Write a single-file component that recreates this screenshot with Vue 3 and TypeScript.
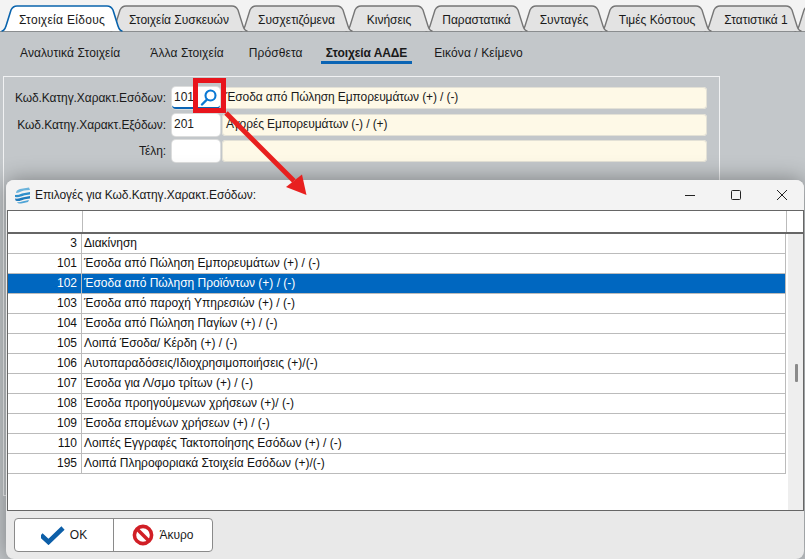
<script setup lang="ts">
interface Tab { label: string; width: number; active?: boolean }
const tabs: Tab[] = [
  { label: 'Στοιχεία Είδους', width: 122, active: true },
  { label: 'Στοιχεία Συσκευών', width: 138 },
  { label: 'Συσχετιζόμενα', width: 113 },
  { label: 'Κινήσεις', width: 88 },
  { label: 'Παραστατικά', width: 103 },
  { label: 'Συνταγές', width: 88 },
  { label: 'Τιμές Κόστους', width: 112 },
  { label: 'Στατιστικά 1', width: 98 },
  { label: '', width: 60 },
]
const tabPath = (w: number): string => {
  const h = 26
  return `M0.5,${h} C3,${h} 4,${h - 2} 5,${h - 5} L10,5 Q12,1 16,1 L${w - 16},1 Q${w - 12},1 ${w - 10},5 L${w - 5},${h - 5} C${w - 4},${h - 2} ${w - 3},${h} ${w - 0.5},${h}`
}
const subTabs = [
  { label: 'Αναλυτικά Στοιχεία' },
  { label: 'Άλλα Στοιχεία' },
  { label: 'Πρόσθετα' },
  { label: 'Στοιχεία ΑΑΔΕ', active: true },
  { label: 'Εικόνα / Κείμενο' },
]
const fields = [
  { label: 'Κωδ.Κατηγ.Χαρακτ.Εσόδων:', code: '101', text: 'Έσοδα από Πώληση Εμπορευμάτων (+) / (-)', focus: true },
  { label: 'Κωδ.Κατηγ.Χαρακτ.Εξόδων:', code: '201', text: 'Αγορές Εμπορευμάτων (-) / (+)', focus: false },
  { label: 'Τέλη:', code: '', text: '', focus: false },
]
const rows = [
  { code: 3, text: 'Διακίνηση' },
  { code: 101, text: 'Έσοδα από Πώληση Εμπορευμάτων (+) / (-)' },
  { code: 102, text: 'Έσοδα από Πώληση Προϊόντων (+) / (-)', selected: true },
  { code: 103, text: 'Έσοδα από παροχή Υπηρεσιών (+) / (-)' },
  { code: 104, text: 'Έσοδα από Πώληση Παγίων (+) / (-)' },
  { code: 105, text: 'Λοιπά Έσοδα/ Κέρδη (+) / (-)' },
  { code: 106, text: 'Αυτοπαραδόσεις/Ιδιοχρησιμοποιήσεις (+)/(-)' },
  { code: 107, text: 'Έσοδα για Λ/σμο τρίτων (+) / (-)' },
  { code: 108, text: 'Έσοδα προηγούμενων χρήσεων (+)/ (-)' },
  { code: 109, text: 'Έσοδα επομένων χρήσεων (+) / (-)' },
  { code: 110, text: 'Λοιπές Εγγραφές Τακτοποίησης Εσόδων (+) / (-)' },
  { code: 195, text: 'Λοιπά Πληροφοριακά Στοιχεία Εσόδων (+)/(-)' },
]
</script>

<template>
  <div class="page">
    <div class="tabbar">
      <div
        v-for="(t, i) in tabs"
        :key="i"
        class="tab"
        :class="{ active: t.active }"
        :style="{ width: t.width + 'px', zIndex: 20 - i }"
      >
        <svg class="tab-shape" :width="t.width" height="27">
          <path :d="tabPath(t.width)" />
        </svg>
        <span class="tab-label">{{ t.label }}</span>
      </div>
    </div>

    <div class="content">
      <nav class="subtabs">
        <span v-for="s in subTabs" :key="s.label" class="subtab" :class="{ on: s.active }">{{ s.label }}</span>
      </nav>

      <section class="panel">
        <div v-for="f in fields" :key="f.label" class="field">
          <label class="field-label">{{ f.label }}</label>
          <div class="code" :class="{ focus: f.focus }">
            <span class="code-value">{{ f.code }}</span>
            <svg v-if="f.focus" class="lens" width="17" height="17" viewBox="0 0 17 17">
              <circle cx="10.5" cy="6.5" r="5" fill="none" stroke="#0a78d4" stroke-width="2.1" />
              <path d="M7 10.5 L2 15.5" stroke="#0a78d4" stroke-width="2.4" stroke-linecap="round" />
            </svg>
          </div>
          <div class="desc">{{ f.text }}</div>
        </div>
      </section>
    </div>

    <div class="dialog">
      <header class="titlebar">
        <svg class="app-icon" width="17" height="17" viewBox="0 0 17 17">
          <path d="M2 6 Q2 3 6 2 L15 0.5 L16 3 Q9 3 6 5 Q4 6 2 6Z" fill="#6cb4dc" />
          <path d="M1 8 Q5 8 8 6.5 L16 5 L16 7.5 Q10 8 7 9.5 Q4 10.500 1 10Z" fill="#2f8fcb" />
          <path d="M1 11.500 Q5 12 8 10.500 L16 9 L16 11.500 Q10 12 7 13.500 Q4 14.500 1.500 13.500Z" fill="#1f7bbc" />
          <path d="M3 15 Q6 15.500 8 14.500 L15 13 L14 15 Q9 16 7 16.500 Q4 17 3 15Z" fill="#4fa4d6" />
        </svg>
        <span class="title">Επιλογές για Κωδ.Κατηγ.Χαρακτ.Εσόδων:</span>
        <div class="win-controls">
          <svg width="10" height="10" viewBox="0 0 10 10"><path d="M0 5.500H10" stroke="#222" stroke-width="1" /></svg>
          <svg width="10" height="10" viewBox="0 0 10 10"><rect x="0.500" y="0.500" width="9" height="9" rx="1" fill="none" stroke="#222" /></svg>
          <svg width="10" height="10" viewBox="0 0 10 10"><path d="M0 0L10 10M10 0L0 10" stroke="#222" stroke-width="1" /></svg>
        </div>
      </header>

      <div class="table">
        <div class="thead">
          <div class="th-code"></div>
          <div class="th-text"></div>
          <div class="th-rest"></div>
        </div>
        <div class="tbody">
          <div class="rows">
            <div v-for="r in rows" :key="r.code" class="row" :class="{ selected: r.selected }">
              <span class="c-code">{{ r.code }}</span>
              <span class="c-text">{{ r.text }}</span>
            </div>
          </div>
          <div class="scrollbar"><div class="thumb"></div></div>
        </div>
      </div>

      <footer class="footer">
        <div class="btn-group">
          <button class="btn">
            <svg width="24" height="20" viewBox="0 0 24 20">
              <path d="M0 10 L7.500 17 L22 3" fill="none" stroke="#0d5fa8" stroke-width="4.600" />
            </svg>
            <span>OK</span>
          </button>
          <button class="btn">
            <svg width="22" height="22" viewBox="0 0 22 22">
              <circle cx="11" cy="11" r="8.600" fill="#fff" stroke="#d11f26" stroke-width="3.600" />
              <path d="M5 5 L17 17" stroke="#d11f26" stroke-width="3.600" />
            </svg>
            <span>Άκυρο</span>
          </button>
        </div>
      </footer>
    </div>

    <svg class="callout" width="805" height="559" viewBox="0 0 805 559">
      <rect x="195.500" y="80.500" width="28" height="30" fill="none" stroke="#e8141c" stroke-width="5" />
      <path d="M226 113 L294 181" stroke="#e8201f" stroke-width="5" />
      <path d="M306.500 195 L286 187 L302 174.500Z" fill="#e8201f" />
    </svg>
  </div>
</template>

<style>
html, body { margin: 0; padding: 0; }
</style>

<style scoped>
.page {
  position: relative;
  width: 805px;
  height: 559px;
  overflow: hidden;
  font-family: "Liberation Sans", Arial, sans-serif;
  font-size: 12px;
  color: #1a1a1a;
  background: #c3c7ca;
}
.tabbar {
  display: flex;
  align-items: flex-end;
  height: 32px;
  box-sizing: border-box;
  padding: 5px 0 0 1px;
  background: #f3f3f3;
  overflow: hidden;
}
.tab {
  position: relative;
  flex: none;
  height: 27px;
  margin-right: -8px;
  display: flex;
  align-items: center;
  justify-content: center;
}
.tab.active { margin-right: -13px; }
.tab-shape { position: absolute; left: 0; top: 0; }
.tab-shape path { fill: #e3e3e3; stroke: #767676; stroke-width: 1.4; }
.tab.active .tab-shape path { fill: #fff; stroke: #0a64ad; stroke-width: 1.6; }
.tab-label { position: relative; top: 1px; }
.tab.active .tab-label { letter-spacing: 0.3px; }
.tab:nth-child(7) .tab-label { left: 1px; }
.tab:nth-child(8) .tab-label { left: 3px; }
.content {
  border-top: 1px solid #8a8d8f;
  margin-top: -1px;
  position: relative;
}
.subtabs {
  display: flex;
  height: 44px;
  box-sizing: border-box;
  padding: 13px 0 0 20px;
}
.subtab {
  margin-right: 26px;
  height: 17px;
  line-height: 17px;
  position: relative;
  letter-spacing: 0.1px;
}
.subtab:nth-child(1) { margin-right: 30px; }
.subtab:nth-child(2) { margin-right: 25px; }
.subtab:nth-child(3) { margin-right: 23px; }
.subtab:nth-child(4) { margin-right: 27px; }
.subtab.on { font-weight: 700; letter-spacing: -0.1px; }
.subtab.on::after {
  content: "";
  position: absolute;
  left: -5px;
  right: -5px;
  bottom: -2px;
  height: 3px;
  background: #0a64b4;
}
.panel {
  margin-left: 3px;
  width: 717px;
  height: 420px;
  box-sizing: border-box;
  border: 1px solid #f1f2f3;
  padding: 10px 0 0;
  display: flex;
  flex-direction: column;
  gap: 4.500px;
}
.field { display: flex; align-items: stretch; height: 22px; }
.field-label {
  width: 162px;
  text-align: right;
  line-height: 22px;
  flex: none;
  letter-spacing: -0.08px;
}
.code {
  margin-left: 6px;
  width: 48px;
  box-sizing: border-box;
  flex: none;
  background: #fff;
  border-radius: 4px;
  box-shadow: 0 0 0 1px #dcdddd;
  display: flex;
  align-items: center;
  justify-content: space-between;
  padding: 0 3px 2px 2px;
}
.code.focus { border-bottom: 2px solid #0a64b4; padding-bottom: 0; }
.code-value { font-size: 12px; }
.lens { flex: none; }
.desc {
  margin-left: 2px;
  width: 485px;
  flex: none;
  box-sizing: border-box;
  background: #fef9e7;
  border-radius: 4px;
  box-shadow: inset 0 0 0 1px #e3e1d6;
  padding-left: 4px;
  line-height: 21px;
  letter-spacing: -0.1px;
}
.dialog {
  position: absolute;
  left: 6px;
  top: 180px;
  width: 798px;
  height: 379px;
  display: flex;
  flex-direction: column;
  background: #e9e9e9;
  border-radius: 8px;
  overflow: hidden;
  box-shadow: 0 0 22px rgba(0, 0, 0, 0.38);
}
.titlebar {
  height: 30px;
  flex: none;
  display: flex;
  align-items: center;
  background: #f3f3f3;
  padding-left: 8px;
  position: relative;
}
.app-icon { flex: none; }
.title { margin-left: 4px; letter-spacing: -0.08px; }
.win-controls {
  margin-left: auto;
  margin-right: 17px;
  display: flex;
  gap: 36px;
}
.table {
  flex: none;
  margin-left: 1px;
  height: 301px;
  box-sizing: border-box;
  border: 1px solid #666;
  background: #fff;
  display: flex;
  flex-direction: column;
}
.thead {
  height: 23px;
  flex: none;
  box-sizing: border-box;
  display: flex;
  border-bottom: 2px solid #666;
}
.th-code { width: 74px; border-right: 1px solid #bbb; flex: none; }
.th-text { flex: 1; border-right: 1px solid #bbb; }
.th-rest { width: 16px; flex: none; }
.tbody { flex: 1; display: flex; min-height: 0; }
.rows { flex: 1; min-width: 0; }
.row {
  display: flex;
  height: 20px;
  box-sizing: border-box;
  border-bottom: 1px solid #bbb;
  border-right: 1px solid #bbb;
  margin-right: 2px;
  line-height: 19px;
  font-size: 12px;
  color: #111;
}
.row.selected {
  background: #0067c0;
  color: #fff;
}
.c-code {
  width: 74px;
  box-sizing: border-box;
  flex: none;
  text-align: right;
  padding-right: 4px;
  border-right: 1px solid #bbb;
}
.c-text { padding-left: 2px; white-space: nowrap; }
.scrollbar {
  width: 15px;
  flex: none;
  background: #eee;
  position: relative;
}
.thumb {
  position: absolute;
  left: 7px;
  top: 130px;
  width: 3px;
  height: 18px;
  background: #8a8a8a;
  border-radius: 1px;
}
.footer {
  flex: 1;
  display: flex;
  align-items: flex-start;
  padding: 7px 0 0 8px;
}
.btn-group {
  display: flex;
  width: 199px;
  height: 34px;
  box-sizing: border-box;
  border: 1px solid #8a8a8a;
  border-radius: 4px;
  background: #fff;
  overflow: hidden;
}
.btn {
  flex: 1;
  border: 0;
  background: none;
  display: flex;
  align-items: center;
  justify-content: center;
  gap: 5px;
  padding: 0;
  font: inherit;
  color: inherit;
}
.btn + .btn { border-left: 1px solid #8a8a8a; }
.callout {
  position: absolute;
  left: 0;
  top: 0;
  pointer-events: none;
}
</style>
